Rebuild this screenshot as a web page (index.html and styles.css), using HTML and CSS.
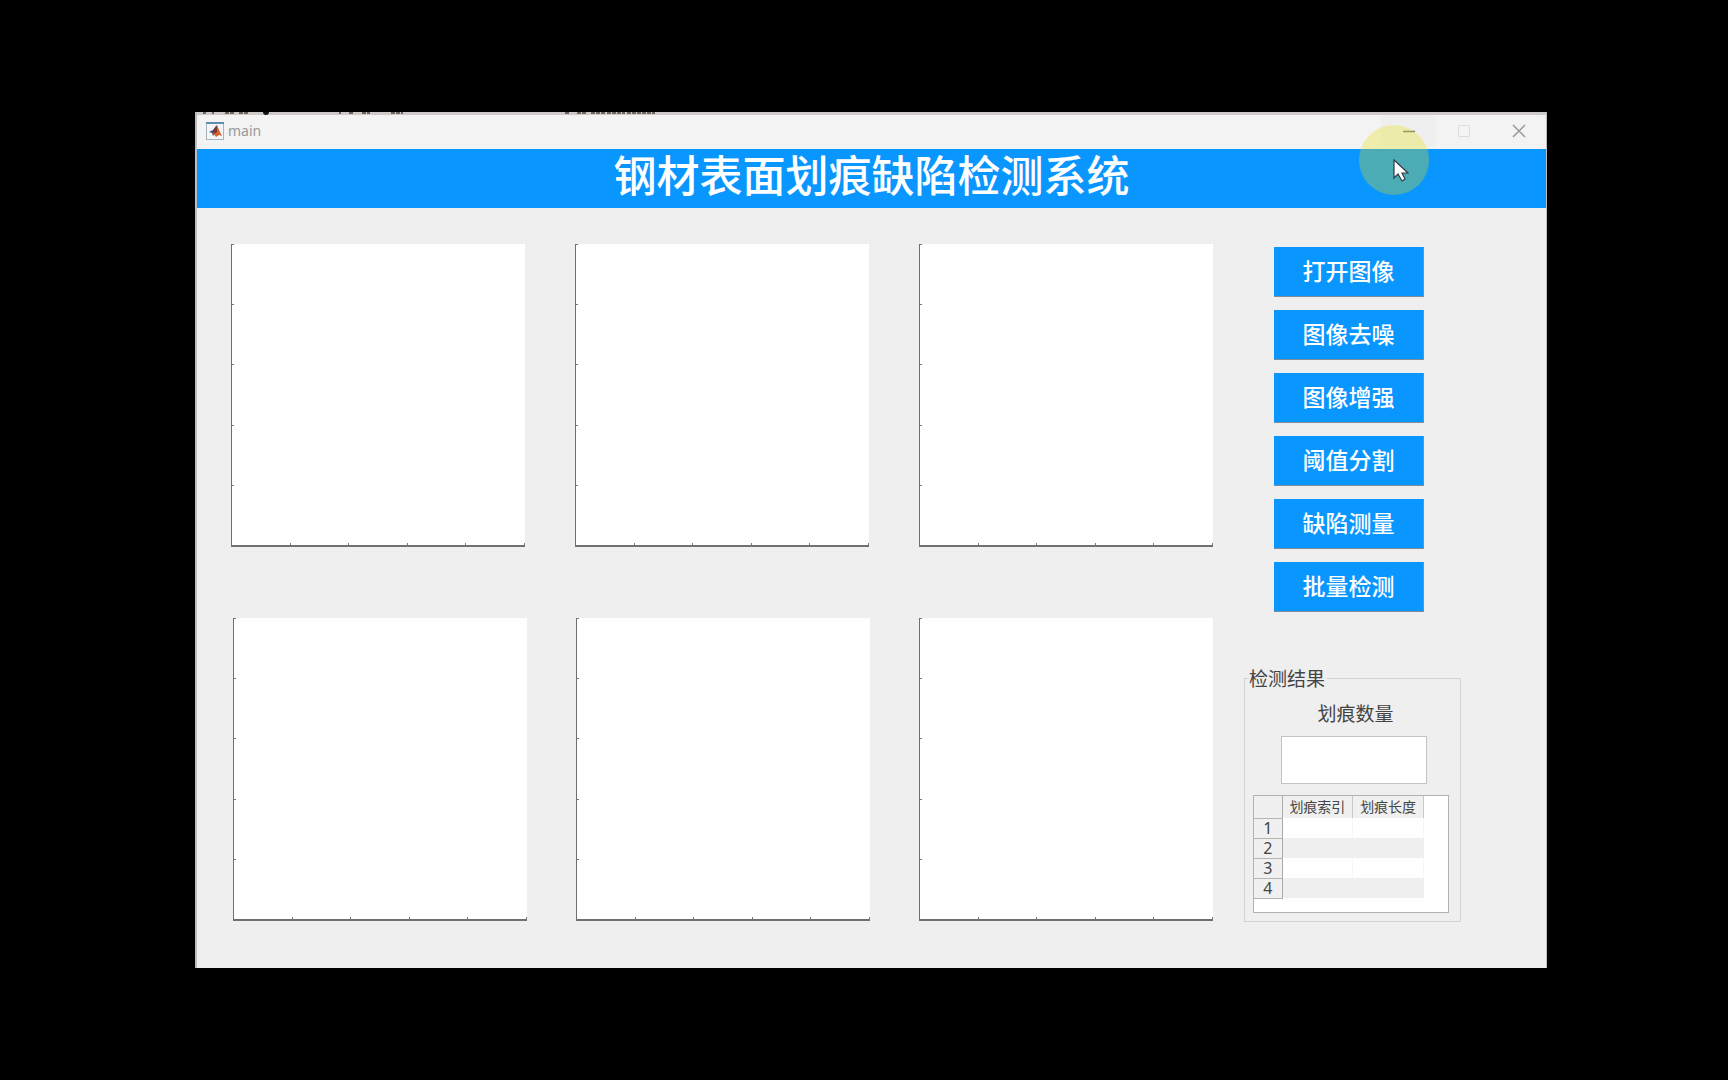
FILE: index.html
```html
<!DOCTYPE html>
<html lang="zh-CN">
<head>
<meta charset="utf-8">
<title>main</title>
<link rel="stylesheet" href="styles.css">
</head>
<body>
<div class="window">
  <svg class="backdrop" height="3" width="480" aria-hidden="true">
    <path d="M6 1h3M15 1h2M28 1h10M42 1h9M142 1h2M152 1h4M165 1h8M194 1h12M368 1h4M380 1h10M394 1h14M410 1h18M430 1h28" stroke="#6e645e" stroke-width="2" stroke-dasharray="4 1"/>
    <circle cx="69" cy="0" r="3" fill="#111"/>
  </svg>
  <header class="titlebar">
    <svg class="app-icon" viewBox="0 0 18 18" aria-hidden="true">
      <rect x=".5" y=".5" width="17" height="17" fill="#f3f6f8" stroke="#a9b4bd"/>
      <path d="M0 1h18" stroke="#5f8fae" stroke-width="2"/>
      <path d="M3 10l4-2 3-4 1 5-4 5-1-3z" fill="#34526f"/>
      <path d="M6 12l2-3 3-6 2 5 3 6-3-1-3 2-2-3z" fill="#d9602b"/>
      <path d="M7 9l4-6v7l-3 2z" fill="#7c3530"/>
    </svg>
    <span class="app-name">main</span>
    <div class="controls">
      <button class="control control-min" aria-label="最小化"><svg viewBox="0 0 14 14"><path d="M1 7.5h12" stroke="#777" stroke-width="1.5"/></svg></button>
      <button class="control" aria-label="最大化"><svg viewBox="0 0 14 14"><rect x="1.5" y="1.5" width="11" height="11" rx="1" fill="none" stroke="#dcdcdc"/></svg></button>
      <button class="control" aria-label="关闭"><svg viewBox="0 0 14 14"><path d="M1 1l12 12M13 1L1 13" stroke="#999" stroke-width="1.5"/></svg></button>
    </div>
  </header>
  <h1 class="banner">钢材表面划痕缺陷检测系统</h1>
  <main class="content">
    <div class="plots">
      <div class="plot-row">
        <div class="plot"></div><div class="plot"></div><div class="plot"></div>
      </div>
      <div class="plot-row plot-row-lower">
        <div class="plot"></div><div class="plot"></div><div class="plot"></div>
      </div>
    </div>
    <aside class="side">
      <div class="actions">
        <button class="action">打开图像</button>
        <button class="action">图像去噪</button>
        <button class="action">图像增强</button>
        <button class="action">阈值分割</button>
        <button class="action">缺陷测量</button>
        <button class="action">批量检测</button>
      </div>
      <fieldset class="results">
        <legend>检测结果</legend>
        <label class="count-label" for="count">划痕数量</label>
        <input class="count" id="count" type="text" readonly>
        <div class="table-box">
          <table>
            <thead><tr><th class="index"></th><th>划痕索引</th><th>划痕长度</th></tr></thead>
            <tbody>
              <tr><th class="index">1</th><td></td><td></td></tr>
              <tr><th class="index">2</th><td></td><td></td></tr>
              <tr><th class="index">3</th><td></td><td></td></tr>
              <tr><th class="index">4</th><td></td><td></td></tr>
            </tbody>
          </table>
        </div>
      </fieldset>
    </aside>
  </main>
  <div class="pointer" aria-hidden="true">
    <svg viewBox="0 0 16 24"><path d="M1 1v18l4-4 4 7 3-2-3-6h6z" fill="#fff" stroke="#333b45" stroke-width="1.2"/></svg>
  </div>
</div>
</body>
</html>
```
FILE: styles.css
```css
* { box-sizing: border-box; }

body {
  margin: 0;
  padding: 112px 181px 112px 195px;
  min-height: 100vh;
  display: flex;
  background: #000;
  color: #444;
  font-family: "Noto Sans", "Noto Sans CJK SC", sans-serif;
}

.window {
  position: relative;
  flex: 1;
  display: flex;
  flex-direction: column;
  background: #efefef;
  border: solid #bdbdbd;
  border-width: 0 1px 0 2px;
}

.backdrop {
  display: block;
  width: 100%;
  background: #cfcaca;
}

.titlebar {
  display: flex;
  align-items: center;
  height: 34px;
  padding: 0 0 2px 9px;
  border-radius: 8px 8px 0 0;
  background: #f3f3f3;
}

.app-icon { width: 18px; height: 18px; }

.app-name {
  margin-left: 4px;
  font-size: 14px;
  line-height: 20px;
  color: #999;
}

.controls { display: flex; margin-left: auto; }

.control {
  display: grid;
  place-items: center;
  width: 55px;
  height: 32px;
  padding: 0;
  border: 0;
  background: none;
}

.control-min { background: #efefef; }
.control svg { width: 14px; height: 14px; }

.banner {
  height: 59px;
  margin: 0;
  background: #0a96ff;
  color: #fff;
  font-size: 43px;
  line-height: 54px;
  font-weight: 500;
  text-align: center;
}

.content {
  display: flex;
  gap: 31px;
  padding: 36px 85px 44px 34px;
}

.plots {
  flex: 1;
  display: flex;
  flex-direction: column;
  gap: 71px;
}

.plot-row { display: flex; gap: 50px; }
.plot-row-lower { gap: 49px; padding-left: 2px; }

/* ticks every fifth of each axis, inside the axes */
.plot {
  flex: 1;
  aspect-ratio: 294 / 303;
  border: solid #707070;
  border-width: 0 0 2px 1px;
  background:
    repeating-linear-gradient(to right, transparent 0 calc(20% - 1px), #777 calc(20% - 1px) 20%) bottom / 100% 2px no-repeat,
    repeating-linear-gradient(to top, transparent 0 calc(20% - 1px), #777 calc(20% - 1px) 20%) left / 2px 100% no-repeat,
    #fff;
}

.side {
  flex: 0 0 217px;
  display: flex;
  flex-direction: column;
}

.actions {
  display: flex;
  flex-direction: column;
  gap: 13px;
  width: 150px;
  margin: 3px 0 0 30px;
}

.action {
  height: 50px;
  padding: 0 0 3px;
  border: solid #7f8c99;
  border-width: 0 1px 1px 0;
  background: #0a96ff;
  color: #fff;
  font: 500 23px/34px "Noto Sans CJK SC", sans-serif;
}

.results {
  display: flex;
  flex-direction: column;
  min-width: 0;
  margin: 55px 0 0;
  padding: 13px 8px 8px;
  border: 1px solid #d2d2d2;
}

.results legend {
  margin-left: -4px;
  padding: 2px 2px 0 0;
  font-size: 19px;
  line-height: 20px;
}

.count-label {
  display: block;
  padding-left: 6px;
  font-size: 19px;
  line-height: 24px;
  text-align: center;
}

.count {
  width: 146px;
  height: 48px;
  margin: 10px 0 11px 28px;
  border: 1px solid #c4c4c4;
  background: #fff;
}

.table-box {
  width: 196px;
  height: 118px;
  border: 1px solid #b2b2b2;
  background: #fff;
}

table {
  width: 170px;
  border-collapse: collapse;
  table-layout: fixed;
}

th {
  height: 22px;
  padding: 0;
  border-right: 1px solid #c8c8c8;
  background: #f0f0f0;
  font-size: 14px;
  line-height: 18px;
  font-weight: 400;
}

.index {
  width: 28px;
  border-right: 1px solid #aaa;
  border-bottom: 1px solid #b4b4b4;
}

tbody .index { height: 20px; font-size: 16px; }
td { padding: 0; border-right: 1px solid #f6f6f6; }
tbody tr:nth-child(even) { background: #efefef; }
tbody tr:nth-child(even) td { border-right-color: #efefef; }

/* highlighted mouse pointer over the window */
.pointer {
  position: absolute;
  top: 13px;
  right: 117px;
  width: 70px;
  height: 70px;
  border-radius: 50%;
  background: rgba(232, 226, 10, 0.3);
  pointer-events: none;
}

.pointer svg {
  position: absolute;
  left: 34px;
  top: 34px;
  width: 16px;
  height: 24px;
}
```
